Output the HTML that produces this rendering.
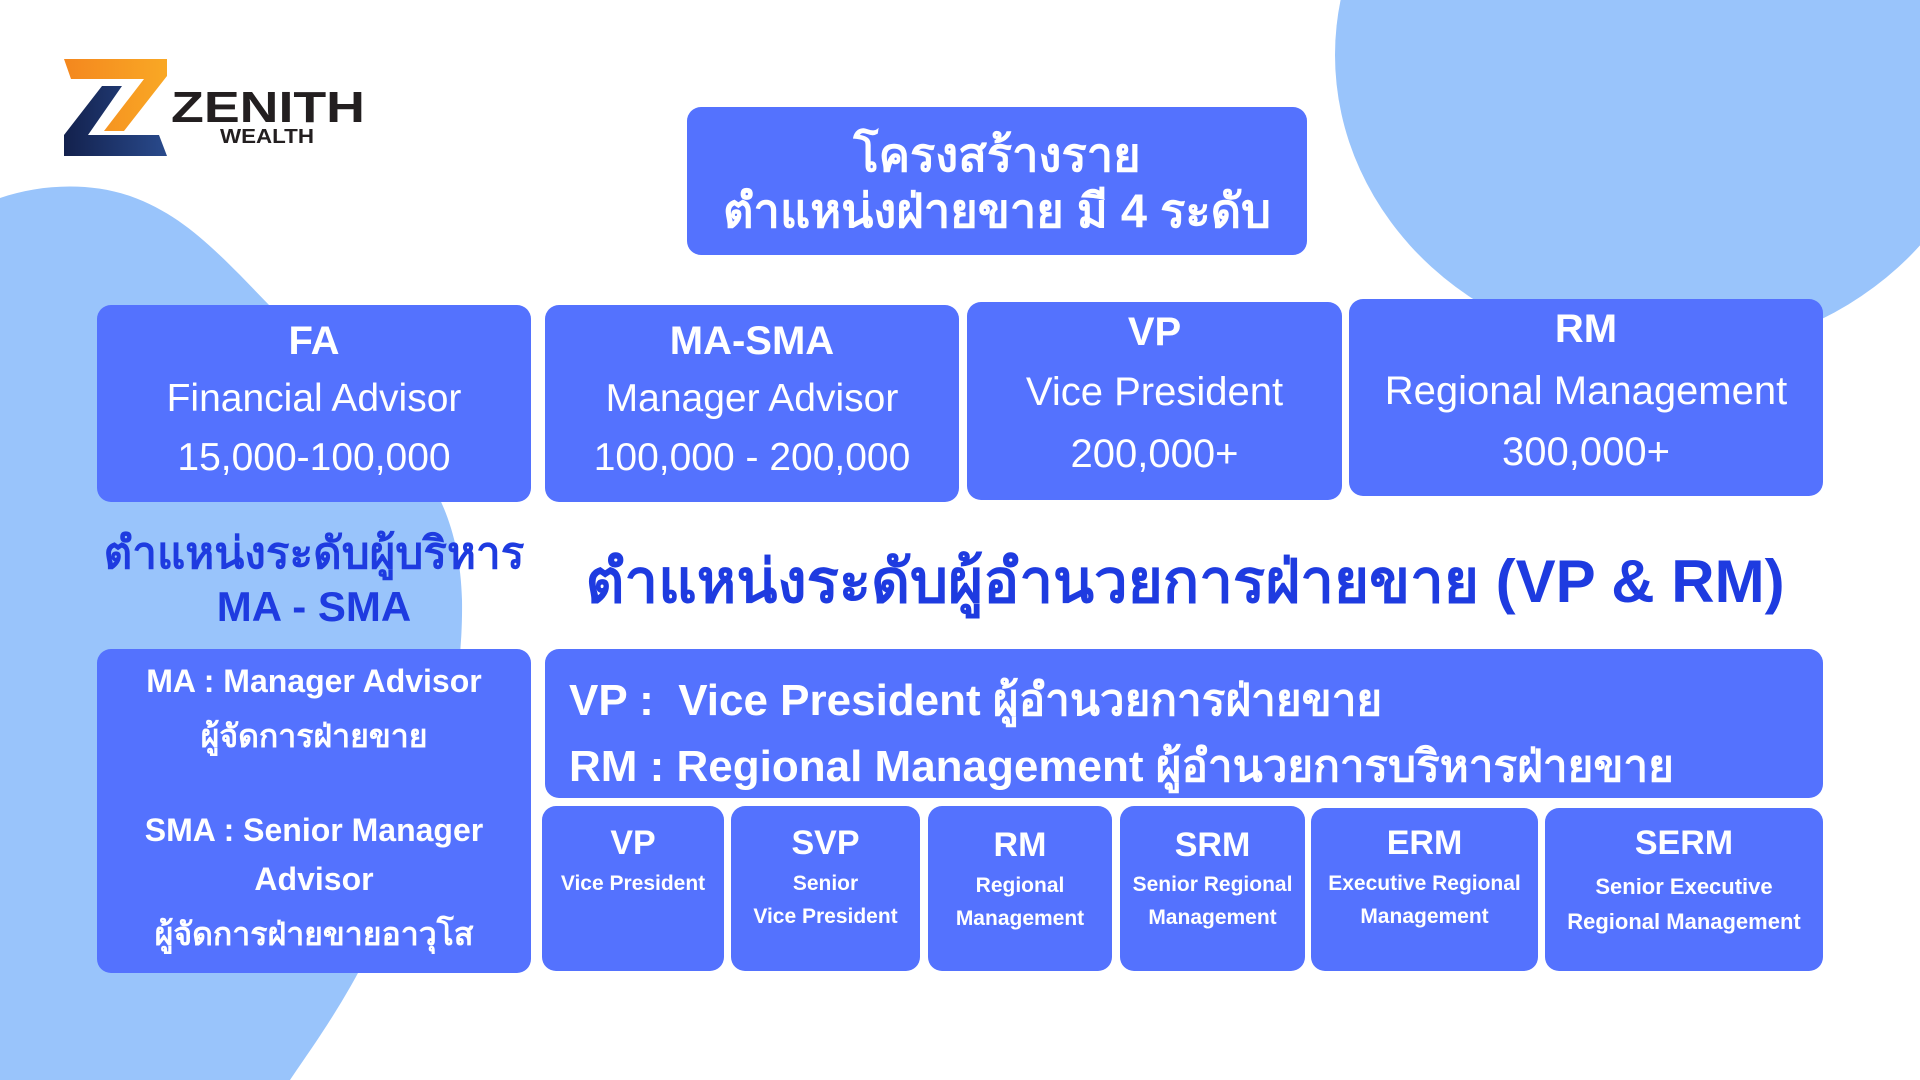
<!DOCTYPE html>
<html><head><meta charset="utf-8"><style>
*{margin:0;padding:0;box-sizing:border-box}
body{width:1920px;height:1080px;overflow:hidden;background:#fff;position:relative;font-family:"Liberation Sans","Noto Sans CJK SC",sans-serif}
.b{position:absolute;background:#5472fe;border-radius:14px;color:#fff;text-align:center}
.l{white-space:nowrap;position:absolute;left:0;right:0;text-align:center}
.bold{font-weight:bold}
</style></head><body>
<svg style="position:absolute;left:0;top:0" width="1920" height="1080">
<ellipse cx="1665" cy="55" rx="330" ry="300" fill="#99c4fb"/>
<path d="M0,198 C40,184 90,182 130,196 C175,212 205,240 240,275 L390,430 C430,470 460,520 462,600 C464,720 420,860 370,950 C340,1010 310,1050 290,1080 L0,1080 Z" fill="#99c4fb"/>
<defs><linearGradient id="o" x1="0" x2="1"><stop offset="0" stop-color="#f4871e"/><stop offset="1" stop-color="#f9a825"/></linearGradient>
<linearGradient id="bl" x1="0" x2="1"><stop offset="0" stop-color="#13214d"/><stop offset="1" stop-color="#294a8c"/></linearGradient></defs>
<polygon points="122,86 102,86 64,135 64,156 167,156 159,135 88,135" fill="url(#bl)"/>
<polygon points="64,59 167,59 167,76 124,131 104,131 144,79 71,79" fill="url(#o)"/>
<text x="171" y="122" font-family="Liberation Sans" font-weight="bold" font-size="44" fill="#231f20" textLength="194" lengthAdjust="spacingAndGlyphs">ZENITH</text>
<text x="220" y="143" font-family="Liberation Sans" font-weight="bold" font-size="20" fill="#231f20" textLength="94" lengthAdjust="spacingAndGlyphs">WEALTH</text>
</svg>

<div class="b bold" style="left:687px;top:107px;width:620px;height:148px;font-size:47px">
<div class="l" style="top:10px">โครงสร้างราย</div>
<div class="l" style="top:66px">ตำแหน่งฝ่ายขาย มี 4 ระดับ</div></div>

<div class="b" style="left:97px;top:305px;width:434px;height:197px">
<div class="l bold" style="top:14px;font-size:40px">FA</div>
<div class="l" style="top:72px;font-size:39px">Financial Advisor</div>
<div class="l" style="top:131px;font-size:39px">15,000-100,000</div></div>
<div class="b" style="left:545px;top:305px;width:414px;height:197px">
<div class="l bold" style="top:14px;font-size:40px">MA-SMA</div>
<div class="l" style="top:72px;font-size:39px">Manager Advisor</div>
<div class="l" style="top:131px;font-size:39px">100,000 - 200,000</div></div>
<div class="b" style="left:967px;top:302px;width:375px;height:198px">
<div class="l bold" style="top:8px;font-size:40px">VP</div>
<div class="l" style="top:68px;font-size:40px">Vice President</div>
<div class="l" style="top:130px;font-size:40px">200,000+</div></div>
<div class="b" style="left:1349px;top:299px;width:474px;height:197px">
<div class="l bold" style="top:8px;font-size:40px">RM</div>
<div class="l" style="top:70px;font-size:40px">Regional Management</div>
<div class="l" style="top:131px;font-size:40px">300,000+</div></div>

<div class="l bold" style="left:97px;width:434px;right:auto;top:518px;font-size:44px;color:#1e3be0">ตำแหน่งระดับผู้บริหาร</div>
<div class="l bold" style="left:97px;width:434px;right:auto;top:583px;font-size:42px;color:#1e3be0">MA - SMA</div>
<div class="l bold" style="left:560px;width:1250px;right:auto;top:534px;font-size:60px;color:#1e3be0">ตำแหน่งระดับผู้อำนวยการฝ่ายขาย (VP &amp; RM)</div>

<div class="b bold" style="left:97px;top:649px;width:434px;height:324px;font-size:32px">
<div class="l" style="top:14px">MA : Manager Advisor</div>
<div class="l" style="top:62px">ผู้จัดการฝ่ายขาย</div>
<div class="l" style="top:163px">SMA : Senior Manager</div>
<div class="l" style="top:212px">Advisor</div>
<div class="l" style="top:260px">ผู้จัดการฝ่ายขายอาวุโส</div></div>

<div class="b bold" style="left:545px;top:649px;width:1278px;height:149px;text-align:left;font-size:44px">
<div style="position:absolute;left:24px;top:16px;white-space:nowrap">VP :&nbsp; Vice President ผู้อำนวยการฝ่ายขาย</div>
<div style="position:absolute;left:24px;top:82px;white-space:nowrap">RM : Regional Management ผู้อำนวยการบริหารฝ่ายขาย</div></div>

<div class="b bold" style="left:542px;top:806px;width:182px;height:165px">
<div class="l" style="top:18px;font-size:34px">VP</div>
<div class="l" style="top:66px;font-size:21px">Vice President</div></div>
<div class="b bold" style="left:731px;top:806px;width:189px;height:165px">
<div class="l" style="top:18px;font-size:34px">SVP</div>
<div class="l" style="top:66px;font-size:21px">Senior</div>
<div class="l" style="top:99px;font-size:21px">Vice President</div></div>
<div class="b bold" style="left:928px;top:806px;width:184px;height:165px">
<div class="l" style="top:20px;font-size:34px">RM</div>
<div class="l" style="top:68px;font-size:21px">Regional</div>
<div class="l" style="top:101px;font-size:21px">Management</div></div>
<div class="b bold" style="left:1120px;top:806px;width:185px;height:165px">
<div class="l" style="top:20px;font-size:34px">SRM</div>
<div class="l" style="top:67px;font-size:21px">Senior Regional</div>
<div class="l" style="top:100px;font-size:21px">Management</div></div>
<div class="b bold" style="left:1311px;top:808px;width:227px;height:163px">
<div class="l" style="top:16px;font-size:34px">ERM</div>
<div class="l" style="top:64px;font-size:21px">Executive Regional</div>
<div class="l" style="top:97px;font-size:21px">Management</div></div>
<div class="b bold" style="left:1545px;top:808px;width:278px;height:163px">
<div class="l" style="top:16px;font-size:34px">SERM</div>
<div class="l" style="top:66px;font-size:22px">Senior Executive</div>
<div class="l" style="top:101px;font-size:22px">Regional Management</div></div>
</body></html>
